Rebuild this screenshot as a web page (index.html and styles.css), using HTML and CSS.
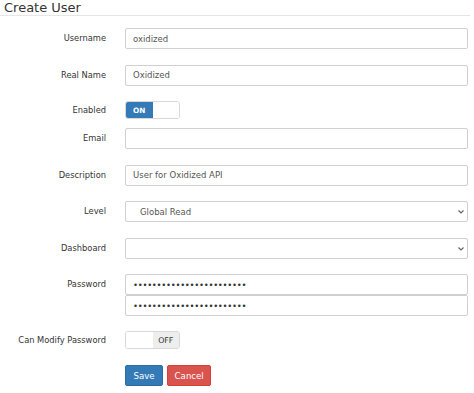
FILE: index.html
```html
<!DOCTYPE html>
<html>
<head>
<meta charset="utf-8">
<link rel="stylesheet" href="styles.css">
</head>
<body>
<h1 class="title">Create User</h1>
<form class="form">
  <div class="row">
    <label class="label">Username</label>
    <div class="control"><input class="input" type="text" value="oxidized"></div>
  </div>
  <div class="row">
    <label class="label">Real Name</label>
    <div class="control"><input class="input" type="text" value="Oxidized"></div>
  </div>
  <div class="row row-toggle">
    <label class="label label-toggle">Enabled</label>
    <div class="control">
      <div class="toggle"><span class="tog-on">ON</span><span class="tog-blank"></span></div>
    </div>
  </div>
  <div class="row">
    <label class="label">Email</label>
    <div class="control"><input class="input" type="text" value=""></div>
  </div>
  <div class="row">
    <label class="label">Description</label>
    <div class="control"><input class="input" type="text" value="User for Oxidized API"></div>
  </div>
  <div class="row">
    <label class="label">Level</label>
    <div class="control select-wrap">
      <select class="input select"><option>Global Read</option></select>
      <svg class="chev" width="8" height="6" viewBox="0 0 8 6"><path d="M1.5 1.5 L4 4 L6.5 1.5" fill="none" stroke="#666" stroke-width="1.2"/></svg>
    </div>
  </div>
  <div class="row">
    <label class="label">Dashboard</label>
    <div class="control select-wrap">
      <select class="input select"><option></option></select>
      <svg class="chev" width="8" height="6" viewBox="0 0 8 6"><path d="M1.5 1.5 L4 4 L6.5 1.5" fill="none" stroke="#666" stroke-width="1.2"/></svg>
    </div>
  </div>
  <div class="row">
    <label class="label">Password</label>
    <div class="control stack">
      <input class="input pw" type="password" value="oxidizedoxidizedoxidized">
      <input class="input pw" type="password" value="oxidizedoxidizedoxidized">
    </div>
  </div>
  <div class="row row-toggle2">
    <label class="label label-toggle">Can Modify Password</label>
    <div class="control">
      <div class="toggle"><span class="tog-blank"></span><span class="tog-off">OFF</span></div>
    </div>
  </div>
  <div class="row">
    <span class="label"></span>
    <div class="control buttons">
      <button type="button" class="btn btn-save">Save</button>
      <button type="button" class="btn btn-cancel">Cancel</button>
    </div>
  </div>
</form>
</body>
</html>
```
FILE: styles.css
```css
html, body {
  margin: 0;
  padding: 0;
  background: #fff;
}
body {
  font-family: "DejaVu Sans", Verdana, sans-serif;
  color: #333;
  width: 474px;
  height: 393px;
  overflow: hidden;
}
.title {
  margin: 0 4px 0 0;
  padding-left: 4px;
  font-size: 13px;
  font-weight: normal;
  line-height: 15px;
  color: #333;
  border-bottom: 1px solid #e6e6e6;
}
.form {
  margin-top: 12px;
}
.row {
  display: flex;
  align-items: flex-start;
  margin-bottom: 15.5px;
}
.row-toggle {
  margin-bottom: 9px;
}
.row-toggle2 {
  margin-top: -0.5px;
  margin-bottom: 16px;
}
.label {
  width: 106px;
  flex: none;
  text-align: right;
  font-size: 8.3px;
  line-height: 21px;
  color: #333;
  margin-right: 19px;
}
.label-toggle {
  line-height: 18px;
}
.control {
  flex: 1;
  margin-right: 6px;
  min-width: 0;
}
.input {
  display: block;
  box-sizing: border-box;
  width: 100%;
  height: 21px;
  margin: 0;
  border: 1px solid #d0d0d0;
  border-radius: 2px;
  padding: 0 7px;
  font-family: "DejaVu Sans", Verdana, sans-serif;
  font-size: 8.5px;
  color: #555;
  background: #fff;
  outline: none;
}
.select-wrap {
  position: relative;
}
.select {
  appearance: none;
  -webkit-appearance: none;
  padding-left: 14px;
}
.chev {
  position: absolute;
  right: 3px;
  top: 8px;
}
.pw {
  color: #333;
  letter-spacing: -0.3px;
}
.toggle {
  display: flex;
  box-sizing: border-box;
  width: 55px;
  height: 18px;
  border: 1px solid #d8d8d8;
  border-radius: 3px;
  overflow: hidden;
}
.toggle span {
  flex: 1;
  display: flex;
  align-items: center;
  justify-content: center;
  font-size: 7.3px;
  font-weight: bold;
}
.tog-on {
  background: #337ab7;
  color: #fff;
}
.tog-blank {
  background: #fff;
}
.toggle .tog-off {
  background: #eeeeee;
  color: #333;
  font-weight: normal;
  font-size: 7.8px;
}
.buttons {
  display: flex;
  gap: 4px;
}
.btn {
  height: 21px;
  box-sizing: border-box;
  padding: 0 6.5px;
  border: 1px solid transparent;
  border-radius: 2px;
  font-family: "DejaVu Sans", Verdana, sans-serif;
  font-size: 8.6px;
  color: #fff;
  cursor: pointer;
}
.btn-save {
  background: #337ab7;
  border-color: #2e6da4;
  padding: 0 7.5px;
}
.btn-cancel {
  background: #d9534f;
  border-color: #d43f3a;
}
```
